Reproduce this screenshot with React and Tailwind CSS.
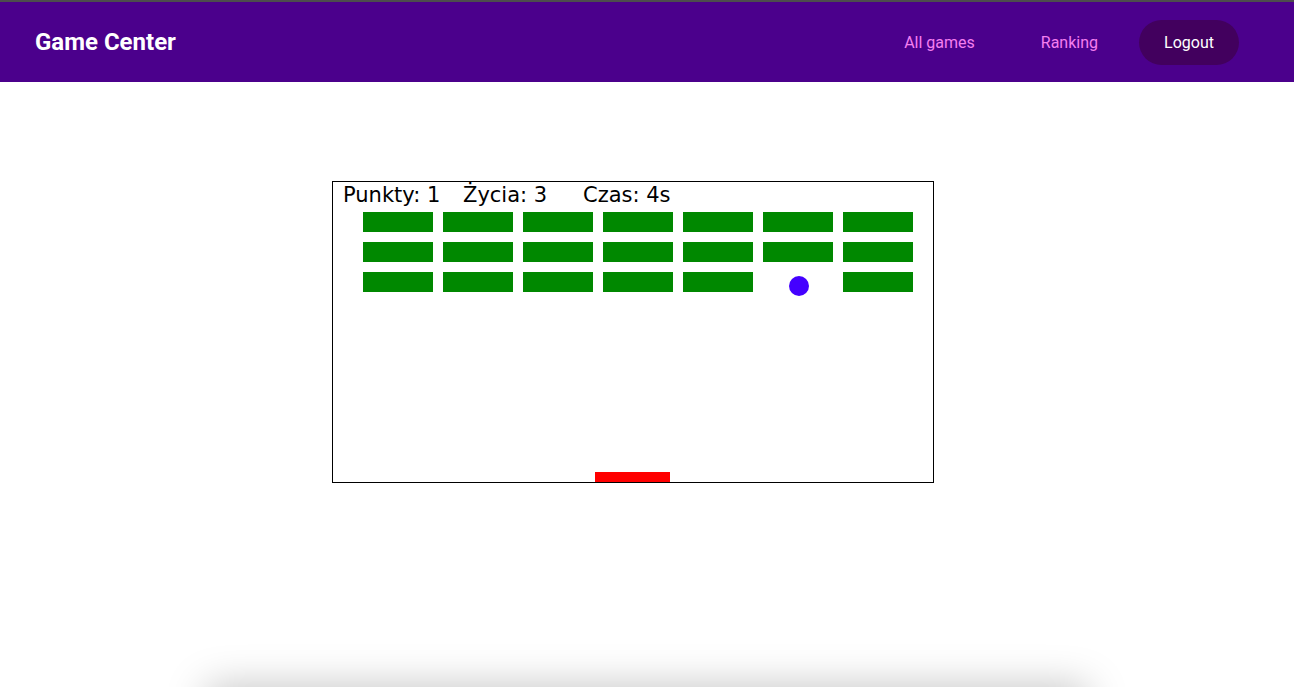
import React from 'react';

const bricks = [];
for (let r = 0; r < 3; r++) {
  for (let c = 0; c < 7; c++) {
    if (r === 2 && c === 5) continue;
    bricks.push({ x: 30 + c * 80, y: 30 + r * 30 });
  }
}

const GameBoard = () => (
  <svg width="600" height="300" viewBox="0 0 600 300" className="block">
    <g fontFamily="'DejaVu Sans', Verdana, sans-serif" fontSize="21" fill="#000">
      <text x="10" y="20">Punkty: 1</text>
      <text x="130" y="20">Życia: 3</text>
      <text x="250" y="20">Czas: 4s</text>
    </g>
    {bricks.map((b, i) => (
      <rect key={i} x={b.x} y={b.y} width="70" height="20" fill="#008800" />
    ))}
    <circle cx="466" cy="104" r="10" fill="#4400ff" />
    <rect x="262" y="290" width="75" height="10" fill="#ff0000" />
  </svg>
);

const App = () => {
  return (
    <div className="h-screen bg-white overflow-hidden" style={{ fontFamily: 'Roboto, sans-serif' }}>
      <div className="h-[2px] bg-[#4d4d4d]"></div>
      {/* Header */}
      <header className="h-[80px] bg-[#4b008c] flex items-center justify-between pl-[35px] pr-[55px]">
        <h1 className="text-[24px] font-bold text-white">Game Center</h1>
        <nav className="flex items-center">
          <a className="text-[16px] text-[#f57ef0] px-[30px] pt-[14px] pb-3">All games</a>
          <a className="text-[16px] text-[#f57ef0] px-[33px] pt-[14px] pb-3 ml-[3px]">Ranking</a>
          <button className="w-[100px] h-[45px] rounded-full bg-[#42005e] text-white text-[16px] ml-[8px] pt-[2px]">
            Logout
          </button>
        </nav>
      </header>

      {/* Game */}
      <main className="flex justify-center pr-[28px] pt-[99px]">
        <div className="border border-black">
          <GameBoard />
        </div>
      </main>

      <div className="mt-[204px] mx-auto w-[880px] h-[40px] bg-white shadow-[0_0_40px_rgba(0,0,0,0.25)]"></div>
    </div>
  );
};

export default App;
